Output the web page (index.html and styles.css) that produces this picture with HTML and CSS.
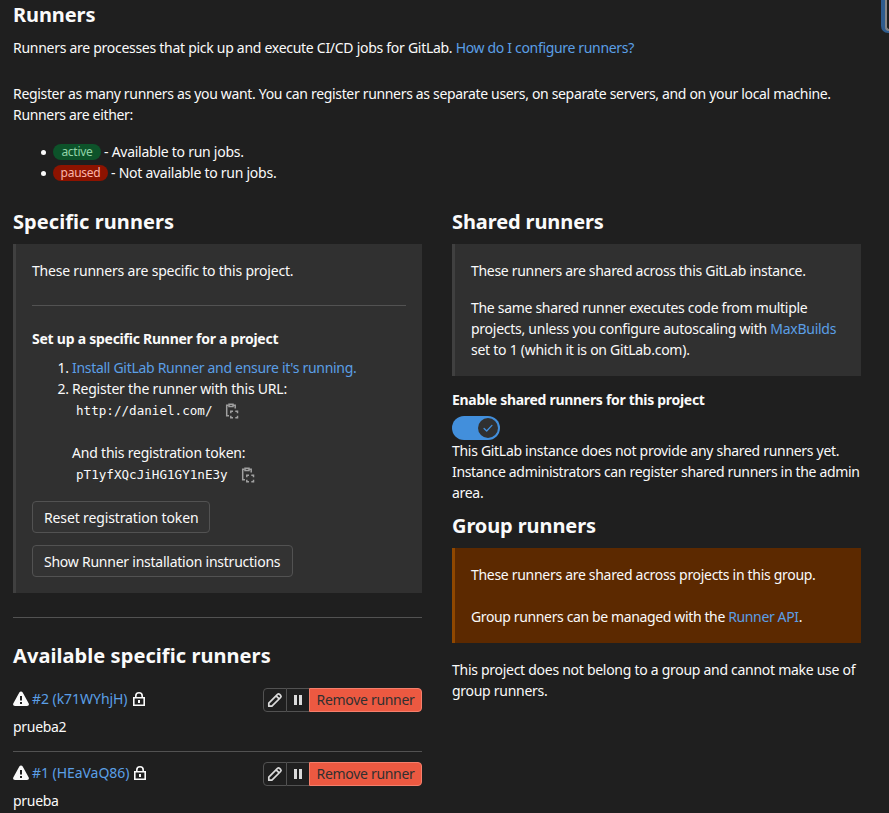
FILE: index.html
```html
<!DOCTYPE html>
<html lang="en">
<head>
<meta charset="utf-8">
<title>Runners</title>
<link rel="stylesheet" href="styles.css">
</head>
<body>
<svg class="defs" width="0" height="0">
  <symbol id="warning" viewBox="0 0 16 16"><path fill-rule="evenodd" d="M9.700 1.600l5.900 10.600c.8 1.400 0 2.800-1.600 2.800H2c-1.600 0-2.400-1.400-1.600-2.800L6.300 1.600c.8-1.400 2.600-1.400 3.400 0zM7 5v4.500h2V5zm0 6v2h2v-2z"/></symbol>
  <symbol id="lock" viewBox="0 0 16 16"><path fill-rule="evenodd" d="M4 6V5a4 4 0 1 1 8 0v1h2v9H2V6zm1.600 0h4.800V5a2.400 2.400 0 0 0-4.800 0zM3.600 7.600v5.800h8.800V7.600zM7 9h2v3H7z"/></symbol>
  <symbol id="pencil" viewBox="0 0 16 16"><path d="M1.800 14.200v-3.100l8.700-8.700a1.500 1.500 0 0 1 2.100 0l1 1a1.500 1.500 0 0 1 0 2.100l-8.700 8.700zM9.100 3.800l3.100 3.100" fill="none" stroke="currentColor" stroke-width="1.700" stroke-linejoin="round"/></symbol>
  <symbol id="pause" viewBox="0 0 16 16"><path d="M4 3h3v10H4zM9 3h3v10H9z"/></symbol>
  <symbol id="copy" viewBox="0 0 16 16"><g fill="none" stroke="currentColor" stroke-width="1.500"><path d="M4.500 2.300H2.700v10.500H5M9 2.300h2.200V5.500"/><path d="M5 3.500V1.200h4v2.300z"/><path d="M6.800 10.300V8.300H9M11.300 8.300h2.200v2M13.500 12.700v2h-2.200M9 14.700H6.800v-2"/></g></symbol>
</svg>
<div class="corner"></div>
<main>
  <h2 class="title">Runners</h2>
  <p class="intro"><span class="f1">Runners are processes that pick up and execute CI/CD jobs for GitLab.</span> <a>How do I configure runners?</a></p>
  <p class="f2">Register as many runners as you want. You can register runners as separate users, on separate servers, and on your local machine.<br>Runners are either:</p>
  <ul>
    <li><span class="badge active">active</span> - Available to run jobs.</li>
    <li><span class="badge paused">paused</span> - Not available to run jobs.</li>
  </ul>
  <div class="columns">
    <section>
      <h2 class="wide">Specific runners</h2>
      <div class="well specific">
        <p class="loose">These runners are specific to this project.</p>
        <hr>
        <h5>Set up a specific Runner for a project</h5>
        <ol>
          <li><a>Install GitLab Runner and ensure it's running.</a></li>
          <li><span class="loose">Register the runner with this URL:</span>
            <div class="codeline"><code>http://daniel.com/</code><svg class="icon"><use href="#copy"/></svg></div>
            <div class="second loose">And this registration token:</div>
            <div class="codeline"><code>pT1yfXQcJiHG1GY1nE3y</code><svg class="icon"><use href="#copy"/></svg></div>
          </li>
        </ol>
        <button class="reset">Reset registration token</button>
        <button class="show">Show Runner installation instructions</button>
      </div>
      <hr class="divider">
      <h2 class="available wide">Available specific runners</h2>
      <div class="runner">
        <div class="row"><svg class="icon"><use href="#warning"/></svg><a>#2 (k71WYhjH)</a><svg class="icon lock"><use href="#lock"/></svg>
          <div class="group"><span class="edit"><svg class="icon"><use href="#pencil"/></svg></span><span class="pause"><svg class="icon"><use href="#pause"/></svg></span><span class="remove">Remove runner</span></div></div>
        <p>prueba2</p>
      </div>
      <div class="runner">
        <div class="row"><svg class="icon"><use href="#warning"/></svg><a>#1 (HEaVaQ86)</a><svg class="icon lock"><use href="#lock"/></svg>
          <div class="group"><span class="edit"><svg class="icon"><use href="#pencil"/></svg></span><span class="pause"><svg class="icon"><use href="#pause"/></svg></span><span class="remove">Remove runner</span></div></div>
        <p>prueba</p>
      </div>
    </section>
    <section>
      <h2>Shared runners</h2>
      <div class="well shared">
        <p>These runners are shared across this GitLab instance.</p>
        <p>The same shared runner executes code from multiple<br><span class="scaling">projects, unless you configure autoscaling with <a>MaxBuilds</a></span><br><span class="scaling">set to 1 (which it is on GitLab.com).</span></p>
      </div>
      <div class="label">Enable shared runners for this project</div>
      <div class="toggle"><span class="knob"><svg viewBox="0 0 16 16"><path d="M3.500 8.500l3 3 6-6.500" fill="none" stroke="currentColor" stroke-width="1.500" stroke-linecap="round" stroke-linejoin="round"/></svg></span></div>
      <p>This GitLab instance does not provide any shared runners yet.<br><span class="tight">Instance administrators can register shared runners in the admin</span><br>area.</p>
      <h2 class="grouphead">Group runners</h2>
      <div class="well warn">
        <p>These runners are shared across projects in this group.</p>
        <p class="api">Group runners can be managed with the <a>Runner API</a>.</p>
      </div>
      <p class="nogroup">This project does not belong to a group and cannot make use of<br>group runners.</p>
    </section>
  </div>
</main>
</body>
</html>
```
FILE: styles.css
```css
* { box-sizing: border-box; }
body {
  margin: 0; height: 813px; overflow: hidden; position: relative;
  background: #1f1f1f; color: #fafafa;
  font: 14px/21px "Noto Sans", "Open Sans", sans-serif;
  letter-spacing: -0.3px; white-space: nowrap;
}
.defs { position: absolute; }
.corner {
  position: absolute; right: 0; top: 0; width: 8px; height: 33px;
  border: solid #2f5c8e; border-width: 0 0 4px 4px; border-radius: 0 0 0 7px;
  background: #1f1f1f;
}
.corner::after {
  content: ""; display: block; height: 29px;
  border: solid #868686; border-width: 0 0 2px 2px; border-radius: 0 0 0 4px;
}
main { padding: 2px 28px 0 13px; }
p, h2, h5, ul, ol { margin: 0; padding: 0; }
a { color: #5b9fe6; }
h2 { font-size: 20px; line-height: 26px; font-weight: 700; letter-spacing: -0.1px; }
.wide { letter-spacing: 0.07px; }
.intro { margin: 9px 0 25px; }
.f1 { letter-spacing: -0.28px; }
.intro a { letter-spacing: -0.33px; }
.f2 { letter-spacing: -0.33px; }
.loose { letter-spacing: -0.2px; }
.scaling { letter-spacing: -0.26px; }
.tight { letter-spacing: -0.34px; }
.api { letter-spacing: -0.37px; }
ul { margin: 16px 0 26px; padding-left: 40px; list-style: none; letter-spacing: -0.26px; }
ul li { display: flex; align-items: center; height: 21px; gap: 3px; }
ul li::before { content: ""; width: 5px; height: 5px; margin: 2px 4px 0 -12px; flex: none; border-radius: 50%; background: #fafafa; }
.badge {
  height: 16px; border-radius: 8px; margin-top: 1px;
  font-size: 12px; line-height: 16px; text-align: center;
}
.active { width: 48px; background: #0d532a; color: #91d4a8; }
.paused { width: 55px; background: #8d1300; color: #fcb5aa; }
.columns { display: grid; grid-template-columns: 409px 409px; gap: 30px; }
.well { margin-top: 9px; padding: 16px; border-left: 3px solid #404040; background: #303030; }
.specific { height: 349px; }
hr { height: 1px; border: 0; margin: 24px 0 22px; background: #525252; }
h5 { font-size: 14px; line-height: 21px; letter-spacing: -0.25px; }
ol { padding-left: 40px; margin: 8px 0 16px; }
.codeline { display: flex; align-items: center; height: 22px; padding-left: 4px; }
code { font: 12.6px/21px "DejaVu Sans Mono", monospace; letter-spacing: 0; }
.icon { width: 16px; height: 16px; flex: none; fill: currentColor; }
.codeline .icon { margin: 1px 0 0 12px; color: #a0a0a0; }
.second { margin-top: 21px; }
button {
  display: block; height: 32px; padding: 0 11px; border: 1px solid #525252; border-radius: 4px;
  background: #333; color: #fafafa; font: inherit; letter-spacing: -0.2px; text-align: left;
}
.reset { width: 178px; margin-bottom: 12px; letter-spacing: -0.13px; }
.show { width: 261px; letter-spacing: -0.24px; }
.divider { margin: 24px 0 25px; }
.available { margin-bottom: 19px; }
.runner { height: 63px; }
.runner + .runner { border-top: 1px solid #525252; padding-top: 10px; }
.row { display: flex; align-items: center; height: 24px; margin-bottom: 4px; }
.row a { margin: -3px 3px 0; letter-spacing: -0.05px; }
.row > .icon { margin-top: -2px; }
.group { display: flex; margin-left: auto; height: 24px; }
.group span { display: flex; align-items: center; justify-content: center; border: 1px solid #525252; }
.group .edit { width: 24px; border-radius: 4px 0 0 4px; color: #dbdbdb; }
.group .pause { width: 22px; border-left: 0; border-right: 0; color: #dbdbdb; }
.group .remove { width: 113px; padding-bottom: 1px; border-color: #f57f6c; border-radius: 0 4px 4px 0; background: #ec5941; color: #303030; }
.shared p + p { margin-top: 16px; }
.label { font-weight: 700; margin: 13px 0 6px; }
.toggle { display: flex; justify-content: flex-end; align-items: center; width: 48px; height: 24px; padding: 2px; border-radius: 12px; background: #428fdc; }
.knob { display: flex; align-items: center; justify-content: center; width: 20px; height: 20px; border-radius: 50%; background: #303030; color: #428fdc; }
.knob svg { width: 14px; height: 14px; }
.grouphead { margin-top: 10px; }
.warn { height: 95px; background: #5c2900; border-color: #8f4700; }
.warn p + p { margin-top: 21px; }
.nogroup { margin-top: 16px; letter-spacing: -0.28px; }
```
